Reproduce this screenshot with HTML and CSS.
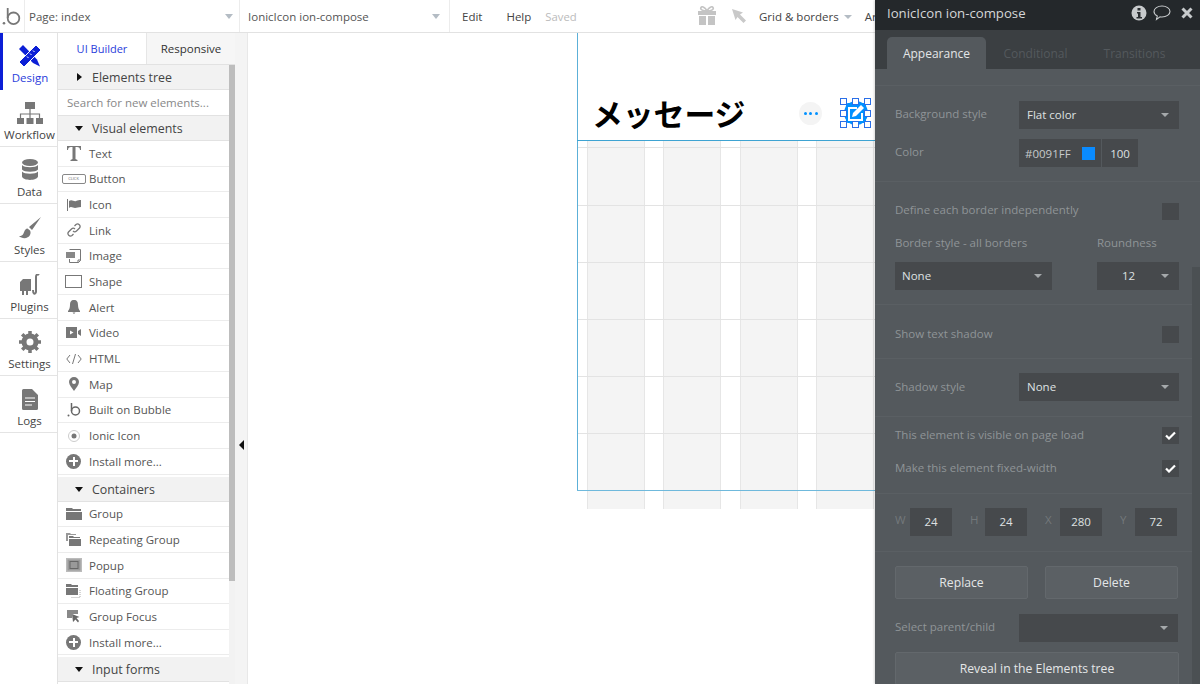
FILE: index.html
```html
<!DOCTYPE html>
<html lang="en">
<head>
  <meta charset="UTF-8" />
  <title>Page: index</title>
  <link rel="stylesheet" href="styles.css">
</head>
<body>

  <div class="topbar">
    <div class="logo">
      <svg width="20" height="20" viewBox="0 0 20 20"><circle cx="11.500" cy="12.300" r="5.800" fill="none" stroke="#777" stroke-width="1.800"/><path d="M5.700 2v10" stroke="#777" stroke-width="1.800"/><circle cx="2" cy="17.300" r="1.300" fill="#777"/></svg>
    </div>
    <div class="top-select page-select">Page: index<span class="caret"></span></div>
    <div class="top-select element-select">IonicIcon ion-compose<span class="caret"></span></div>
    <div class="top-menu">
      <span class="menu-item edit">Edit</span>
      <span class="menu-item help">Help</span>
      <span class="saved">Saved</span>
    </div>
    <div class="top-right">
      <svg width="20" height="20" viewBox="0 0 20 20"><path d="M1 5h18v4H1zM2 10h7v9H2zM11 10h7v9h-7z" fill="#c4c4c4"/><path d="M10 5C8 1 5 0 4 1.500S5 5 10 5c5 0 7-2 6-3.500S12 1 10 5z" fill="none" stroke="#c4c4c4" stroke-width="1.600"/></svg>
      <svg class="cursor-icon" width="16" height="16" viewBox="0 0 16 16"><path d="M1 1l11 3.500-3 2 6 6-2.500 2.500-6-6-2 3z" fill="#c9c9c9"/></svg>
      <span class="menu-item grid-menu">Grid &amp; borders<span class="caret small"></span></span>
      <span class="menu-item">Ar</span>
    </div>
  </div>

  <div class="main">
    <div class="rail">
      <div class="rail-item active">
        <svg width="22" height="22" viewBox="0 0 22 22"><path d="M4 0L0 4l14 14 7 3.500L18 14.500z" fill="#0c1fd6"/><path d="M17 0l5 5L5 22l-5-5z" fill="#0c1fd6" stroke="#fff" stroke-width="1"/><path d="M14 5.500l1.500 1.500M11 8.500l1.500 1.500M8 11.500L9.500 13" stroke="#fff" stroke-width="1"/></svg>
        <span>Design</span>
      </div>
      <div class="rail-item">
        <svg width="26" height="22" viewBox="0 0 26 22"><path d="M8 0h10v7H8zM0 16h7v6H0zM9.500 16h7v6h-7zM19 16h7v6h-7z" fill="#777"/><path d="M13 7v9M3.500 16v-4h19v4" fill="none" stroke="#777" stroke-width="1.200"/></svg>
        <span>Workflow</span>
      </div>
      <div class="rail-item">
        <svg width="18" height="22" viewBox="0 0 18 22"><ellipse cx="9" cy="3.500" rx="8" ry="3.500" fill="#777"/><path d="M1 6c2 3 14 3 16 0v4.500c-2 3-14 3-16 0zM1 12.500c2 3 14 3 16 0v5c-1 4.500-15 4.500-16 0z" fill="#777"/></svg>
        <span>Data</span>
      </div>
      <div class="rail-item">
        <svg width="24" height="22" viewBox="0 0 24 22"><path d="M23 0L11 10l3 3zM9.500 11.500C6 12 6.500 16 4.500 18 3.500 19 2 19 1 19c3 3 9 3 11-1 1-2 .5-3.500 0-4.500z" fill="#777"/></svg>
        <span>Styles</span>
      </div>
      <div class="rail-item">
        <svg width="22" height="22" viewBox="0 0 22 22"><path d="M1 8l3-3h8v12H9v4H7v-4H5v4H3v-4H1z" fill="#777"/><path d="M14 16c0 4 2 5 3 2V3c0-3 2-3 3-2" fill="none" stroke="#777" stroke-width="2"/></svg>
        <span>Plugins</span>
      </div>
      <div class="rail-item">
        <svg width="22" height="22" viewBox="0 0 22 22"><circle cx="11" cy="11" r="6" fill="none" stroke="#777" stroke-width="5"/><path d="M11 0v22M0 11h22M3.200 3.200l15.600 15.600M18.800 3.200L3.200 18.800" stroke="#777" stroke-width="3.500" stroke-dasharray="4 14"/></svg>
        <span>Settings</span>
      </div>
      <div class="rail-item">
        <svg width="16" height="21" viewBox="0 0 16 21"><path d="M0 1.500A1.500 1.500 0 0 1 1.500 0H10l6 6v13.500a1.500 1.500 0 0 1-1.500 1.500h-13A1.500 1.500 0 0 1 0 19.500z" fill="#777"/><path d="M3 9h10M3 12.500h10M3 16h7" stroke="#fff" stroke-width="1.200"/></svg>
        <span>Logs</span>
      </div>
    </div>

    <div class="panel">
      <div class="tabs">
        <div class="tab on">UI Builder</div>
        <div class="tab">Responsive</div>
      </div>
      <div class="list-wrap">
        <div class="list">
          <div class="group-head"><span class="tri right"></span>Elements tree</div>
          <div class="search">Search for new elements...</div>
          <div class="group-head"><span class="tri"></span>Visual elements</div>
          <div class="row"><span class="ico"><svg width="14" height="15" viewBox="0 0 14 15"><path d="M0 0h14v4h-1c0-2-1-3-3-3H8.500v12l2 1v1h-7v-1l2-1V1H4C2 1 1 2 1 4H0z" fill="#777"/></svg></span>Text</div>
          <div class="row"><span class="ico"><span class="click-btn">CLICK</span></span>Button</div>
          <div class="row"><span class="ico"><svg width="14" height="12" viewBox="0 0 14 12"><path d="M0 0h1v12H0zM2 2c3-2 5 1 7 0s3-1 5-1v7c-3 0-4 1-6 1S4 7 2 9z" fill="#777"/></svg></span>Icon</div>
          <div class="row"><span class="ico"><svg width="14" height="14" viewBox="0 0 14 14"><path d="M6 8a2.500 2.500 0 0 0 3.500 0l3-3A2.500 2.500 0 0 0 9 1.500L7.500 3M8 6a2.500 2.500 0 0 0-3.500 0l-3 3A2.500 2.500 0 0 0 5 12.500L6.500 11" fill="none" stroke="#777" stroke-width="1.300"/></svg></span>Link</div>
          <div class="row"><span class="ico"><svg width="15" height="14" viewBox="0 0 15 14"><path d="M3.500.5h11v11l-2 2h-9V10" fill="none" stroke="#777"/><rect x="0" y="3" width="9" height="6" fill="#888"/><path d="M12 14l0-3h3" fill="none" stroke="#777"/></svg></span>Image</div>
          <div class="row"><span class="ico"><span class="shape-box"></span></span>Shape</div>
          <div class="row"><span class="ico"><svg width="12" height="14" viewBox="0 0 12 14"><path d="M6 0c3 0 4 2 4 5 0 3 1 5 2 6v1H0v-1c1-1 2-3 2-6 0-3 1-5 4-5zM4.500 12.500h3L6 14z" fill="#777"/></svg></span>Alert</div>
          <div class="row"><span class="ico"><svg width="15" height="11" viewBox="0 0 15 11"><path d="M0 0h11v11H0zM12 4l3-2v7l-3-2z" fill="#777"/><path d="M4 3.500l3.500 2L4 7.500z" fill="#fff"/></svg></span>Video</div>
          <div class="row"><span class="ico"><svg width="16" height="10" viewBox="0 0 16 10"><path d="M4 1L.8 5 4 9M12 1l3.200 4L12 9M9.500 0L6.500 10" fill="none" stroke="#777"/></svg></span>HTML</div>
          <div class="row"><span class="ico"><svg width="10" height="14" viewBox="0 0 10 14"><path fill-rule="evenodd" d="M5 0a5 5 0 0 1 5 5c0 3-3 6-5 9-2-3-5-6-5-9a5 5 0 0 1 5-5zm0 3a2 2 0 1 0 0 4 2 2 0 0 0 0-4z" fill="#777"/></svg></span>Map</div>
          <div class="row"><span class="ico"><svg width="14" height="15" viewBox="0 0 14 15"><circle cx="8.500" cy="9" r="4" fill="none" stroke="#666" stroke-width="1.500"/><path d="M4.500 1v8" stroke="#666" stroke-width="1.500"/><circle cx="1.500" cy="13.500" r="1" fill="#666"/></svg></span>Built on Bubble</div>
          <div class="row"><span class="ico"><svg width="12" height="12" viewBox="0 0 12 12"><circle cx="6" cy="6" r="5.500" fill="none" stroke="#ccc"/><circle cx="6" cy="6" r="2.500" fill="#777"/></svg></span>Ionic Icon</div>
          <div class="row"><span class="ico"><span class="plus"></span></span>Install more...</div>
          <div class="group-head"><span class="tri"></span>Containers</div>
          <div class="row"><span class="ico"><svg width="16" height="13" viewBox="0 0 16 13"><path d="M0 1h6l1 1h8v2H0zM0 5h16v8H0z" fill="#777"/></svg></span>Group</div>
          <div class="row"><span class="ico"><svg width="15" height="13" viewBox="0 0 15 13"><path d="M0 0h4l1 1h5v1H2v6H0z" fill="#999"/><path d="M3 3h4l1 1h6v1H3zM3 6h12v7H3z" fill="#777"/></svg></span>Repeating Group</div>
          <div class="row"><span class="ico"><svg width="16" height="14" viewBox="0 0 16 14"><rect width="16" height="14" fill="#bbb"/><rect x="1.500" y="1.500" width="13" height="11" fill="#999"/><rect x="4" y="3.500" width="8" height="7" fill="none" stroke="#666"/></svg></span>Popup</div>
          <div class="row"><span class="ico"><svg width="15" height="14" viewBox="0 0 15 14"><path d="M0 0h5l1 1h6v2H0zM0 4h12v7H0z" fill="#777"/><path d="M14 6v7.500H5" fill="none" stroke="#aaa" stroke-dasharray="1 1"/></svg></span>Floating Group</div>
          <div class="row"><span class="ico"><svg width="13" height="13" viewBox="0 0 13 13"><path d="M0 0h11v4H5v4H0z" fill="#888"/><path d="M5 4l7.500 3-3 1 2.500 3-1 1.500-2.500-3L6 12z" fill="#666"/></svg></span>Group Focus</div>
          <div class="row"><span class="ico"><span class="plus"></span></span>Install more...</div>
          <div class="group-head"><span class="tri"></span>Input forms</div>
        </div>
        <div class="scroll"><div class="scroll-thumb"></div></div>
      </div>
    </div>

    <div class="gutter"><span class="collapse"></span></div>

    <div class="canvas">
      <div class="grid-cols">
        <div class="grid-col"></div>
        <div class="grid-col"></div>
        <div class="grid-col"></div>
        <div class="grid-col"></div>
      </div>
      <div class="h-line" style="top:114px"></div>
      <div class="h-line" style="top:172px"></div>
      <div class="h-line" style="top:229px"></div>
      <div class="h-line" style="top:286px"></div>
      <div class="h-line" style="top:343px"></div>
      <div class="h-line" style="top:400px"></div>
      <div class="frame-left"></div>
      <div class="frame-bottom"></div>
      <div class="page-rule"></div>
      <div class="title">メッセージ</div>
      <div class="more"><i></i><i></i><i></i></div>
      <div class="compose">
        <svg width="24" height="24" viewBox="0 0 24 24"><circle cx="12" cy="12" r="12" fill="#0091ff"/><rect x="2" y="2" width="20" height="20" rx="2" fill="#0091ff"/><path d="M18 12v7H5V7h8" fill="none" stroke="#fff" stroke-width="2"/><path d="M8 16l1-4 8-8 3 3-8 8z" fill="#fff"/></svg>
        <b class="h1"></b><b class="h2"></b><b class="h3"></b><b class="h4"></b><b class="h5"></b><b class="h6"></b><b class="h7"></b><b class="h8"></b>
      </div>
    </div>
  </div>

  <div class="editor">
    <div class="editor-head">
      <span class="editor-title">IonicIcon ion-compose</span>
      <svg width="16" height="16" viewBox="0 0 16 16"><circle cx="8" cy="8" r="7.500" fill="#c7cacc"/><path d="M6.500 3h3v2.500h-3zM6 7h3.500v5H11v1.500H5.500V12H7V8.500H6z" fill="#2a2e31"/></svg>
      <svg class="chat" width="18" height="16" viewBox="0 0 18 16"><path d="M9 1c4.400 0 8 2.400 8 5.500S13.400 12 9 12c-.7 0-1.400 0-2-.2L3.500 14.500l.8-3.500C2.300 10 1 8.400 1 6.500 1 3.400 4.600 1 9 1z" fill="none" stroke="#c7cacc" stroke-width="1.100"/></svg>
      <svg class="close" width="12" height="12" viewBox="0 0 12 12"><path d="M1.500 1.500l9 9M10.500 1.500l-9 9" stroke="#c7cacc" stroke-width="3"/></svg>
    </div>
    <div class="editor-tabs">
      <div class="etab on">Appearance</div>
      <div class="etab">Conditional</div>
      <div class="etab">Transitions</div>
    </div>
    <div class="editor-body">
      <div class="sec sec-bg">
        <div class="field">
          <label>Background style</label>
          <div class="sel wide">Flat color<span class="caret"></span></div>
        </div>
        <div class="field">
          <label>Color</label>
          <div class="color-box">
            <span class="hex">#0091FF</span><span class="swatch"></span>
          </div>
          <div class="opacity">100</div>
        </div>
      </div>
      <div class="sec sec-border">
        <div class="field check-row">
          <label>Define each border independently</label>
          <span class="check"></span>
        </div>
        <div class="border-cols">
          <div class="col-left">
            <label>Border style - all borders</label>
            <div class="sel mid">None<span class="caret"></span></div>
          </div>
          <div class="col-right">
            <label>Roundness</label>
            <div class="sel small-sel"><em>12</em><span class="caret"></span></div>
          </div>
        </div>
      </div>
      <div class="sec sec-shadow">
        <div class="field check-row">
          <label>Show text shadow</label>
          <span class="check"></span>
        </div>
      </div>
      <div class="sec sec-style">
        <div class="field">
          <label>Shadow style</label>
          <div class="sel wide">None<span class="caret"></span></div>
        </div>
      </div>
      <div class="sec sec-vis">
        <div class="field check-row">
          <label>This element is visible on page load</label>
          <span class="check on"><svg width="11" height="9" viewBox="0 0 11 9"><path d="M1 4.500l3 3 6-6" fill="none" stroke="#fff" stroke-width="2.200"/></svg></span>
        </div>
        <div class="field check-row">
          <label>Make this element fixed-width</label>
          <span class="check on"><svg width="11" height="9" viewBox="0 0 11 9"><path d="M1 4.500l3 3 6-6" fill="none" stroke="#fff" stroke-width="2.200"/></svg></span>
        </div>
      </div>
      <div class="sec sec-size">
        <span class="dim">W</span><span class="num">24</span>
        <span class="dim">H</span><span class="num">24</span>
        <span class="dim">X</span><span class="num">280</span>
        <span class="dim">Y</span><span class="num">72</span>
      </div>
      <div class="sec-actions">
        <div class="btn-row">
          <div class="btn">Replace</div>
          <div class="btn">Delete</div>
        </div>
        <div class="field">
          <label>Select parent/child</label>
          <div class="sel wide"><span class="caret"></span></div>
        </div>
        <div class="btn reveal">Reveal in the Elements tree</div>
      </div>
      <div class="editor-scroll"></div>
    </div>
  </div>

</body>
</html>
```

FILE: styles.css
```css
* {
  margin: 0;
  padding: 0;
  box-sizing: border-box;
}

body {
  width: 1200px;
  height: 684px;
  overflow: hidden;
  position: relative;
  background: #fff;
  color: #444;
  font-family: "Open Sans", "Noto Sans", sans-serif;
  font-size: 11.500px;
}

.caret {
  display: inline-block;
  width: 0;
  height: 0;
  border-left: 4.500px solid transparent;
  border-right: 4.500px solid transparent;
  border-top: 5px solid #b4bcc4;
}

/* top bar */
.topbar {
  height: 33px;
  display: flex;
  align-items: center;
  border-bottom: 1px solid #e2e2e2;
  background: #fff;
}

.logo {
  width: 25px;
  height: 32px;
  display: flex;
  align-items: center;
  justify-content: center;
  border-right: 1px solid #ececec;
}

.top-select {
  height: 32px;
  display: flex;
  align-items: center;
  justify-content: space-between;
  border-right: 1px solid #ececec;
  color: #555;
}

.page-select {
  width: 215px;
  padding: 0 6px 0 4px;
}

.element-select {
  width: 210px;
  padding: 0 9px 0 8px;
}

.top-menu {
  display: flex;
  align-items: center;
  padding-left: 12px;
}

.menu-item {
  color: #444;
}

.help {
  margin-left: 24px;
}

.saved {
  margin-left: 14px;
  font-size: 11.300px;
  color: #bbb;
}

.top-right {
  position: absolute;
  top: 0;
  left: 697px;
  height: 32px;
  display: flex;
  align-items: center;
  white-space: nowrap;
}

.top-right > * {
  flex: none;
}

.cursor-icon {
  margin-left: 14px;
}

.grid-menu {
  margin-left: 12px;
  margin-right: 13px;
}

.caret.small {
  margin-left: 5px;
  border-left-width: 4px;
  border-right-width: 4px;
  border-top-width: 4px;
  vertical-align: middle;
}

/* main area */
.main {
  display: flex;
  height: 651px;
}

.rail {
  width: 58px;
  flex: none;
  border-right: 1px solid #e2e2e2;
}

.rail-item {
  height: 57.170px;
  display: flex;
  flex-direction: column;
  align-items: center;
  justify-content: flex-end;
  padding: 0 0 4px 2px;
  gap: 2px;
  border-bottom: 1px solid #e4e4e4;
  color: #444;
}

.rail-item svg {
  margin-bottom: 1px;
}

.rail-item.active {
  color: #2a3ddb;
  padding: 0 0 5px;
  border-left: 3px solid #0c1fd6;
  border-bottom: none;
}

.panel {
  width: 177px;
  flex: none;
  display: flex;
  flex-direction: column;
  overflow: hidden;
}

.tabs {
  height: 32px;
  display: flex;
  flex: none;
  border-bottom: 1px solid #e2e2e2;
}

.tab {
  flex: 1;
  display: flex;
  align-items: center;
  justify-content: center;
  background: #f6f6f6;
  color: #333;
  border-left: 1px solid #e6e6e6;
}

.tab.on {
  background: #fff;
  color: #2a3ddb;
  font-size: 11px;
  border-left: none;
  flex: 0 0 88px;
}

.list-wrap {
  display: flex;
  flex: 1;
  overflow: hidden;
}

.list {
  width: 171px;
  flex: none;
}

.group-head {
  height: 25px;
  display: flex;
  align-items: center;
  padding-left: 17px;
  background: #f2f2f2;
  font-size: 12.400px;
  color: #444;
  border-bottom: 1px solid #e2e2e2;
}

.row + .group-head {
  margin-top: 2px;
  padding-top: 1px;
}

.tri {
  width: 0;
  height: 0;
  margin-right: 9px;
  border-left: 4px solid transparent;
  border-right: 4px solid transparent;
  border-top: 5px solid #111;
}

.tri.right {
  margin-left: 2px;
  margin-right: 10px;
  border-top: 4.500px solid transparent;
  border-bottom: 4.500px solid transparent;
  border-left: 5px solid #111;
  border-right: none;
}

.search {
  height: 26px;
  display: flex;
  align-items: center;
  padding: 0 0 0 9px;
  color: #888;
  border-bottom: 1px solid #e2e2e2;
}

.row {
  height: 25.670px;
  display: flex;
  align-items: center;
  color: #555;
  border-bottom: 1px solid #ececec;
}

.ico {
  width: 31px;
  flex: none;
  display: flex;
  justify-content: center;
}

.click-btn {
  width: 24px;
  height: 10px;
  border: 1px solid #888;
  border-radius: 2px;
  font-size: 4px;
  line-height: 8px;
  text-align: center;
  color: #666;
}

.shape-box {
  width: 17px;
  height: 13px;
  border: 1px solid #777;
}

.plus {
  position: relative;
  width: 15px;
  height: 15px;
  border-radius: 50%;
  background: #777;
}

.plus::before,
.plus::after {
  content: "";
  position: absolute;
  background: #fff;
}

.plus::before {
  left: 3px;
  top: 6.500px;
  width: 9px;
  height: 2px;
}

.plus::after {
  left: 6.500px;
  top: 3px;
  width: 2px;
  height: 9px;
}

.scroll {
  width: 6px;
  flex: none;
  background: #f2f2f2;
}

.scroll-thumb {
  height: 516px;
  background: #bdbdbd;
}

.gutter {
  width: 13px;
  flex: none;
  display: flex;
  align-items: center;
  justify-content: center;
  padding-top: 172px;
  background: #f4f4f4;
  border-right: 1px solid #e8e8e8;
}

.collapse {
  width: 0;
  height: 0;
  border-top: 5px solid transparent;
  border-bottom: 5px solid transparent;
  border-right: 5px solid #111;
}

/* free canvas */
.canvas {
  position: relative;
  flex: 1;
  overflow: hidden;
  background: #fff;
}

.grid-cols {
  position: absolute;
  left: 339px;
  top: 108px;
  height: 368px;
  display: flex;
  gap: 18.300px;
}

.grid-col {
  width: 58px;
  background: #f4f4f4;
  border-left: 1px solid #e6e6e6;
  border-right: 1px solid #e6e6e6;
}

.h-line {
  position: absolute;
  left: 329px;
  right: 0;
  height: 1px;
  background: #e3e3e3;
}

.frame-left {
  position: absolute;
  left: 329px;
  top: 0;
  width: 1px;
  height: 457px;
  background: #5cb0d8;
}

.frame-bottom {
  position: absolute;
  left: 329px;
  right: 0;
  top: 457px;
  height: 1px;
  background: #6fb9dc;
}

.page-rule {
  position: absolute;
  left: 329px;
  right: 0;
  top: 107px;
  height: 1px;
  background: #3ea3d2;
}

.title {
  position: absolute;
  left: 344px;
  top: 58px;
  font-family: "Noto Sans CJK JP", sans-serif;
  font-size: 30.800px;
  font-weight: 700;
  line-height: 44px;
  color: #000;
}

.more {
  position: absolute;
  left: 551px;
  top: 69px;
  width: 23px;
  height: 23px;
  display: flex;
  align-items: center;
  justify-content: center;
  gap: 2.500px;
  border-radius: 50%;
  background: #f4f4f4;
}

.more i {
  width: 3px;
  height: 3px;
  border-radius: 50%;
  background: #0091ff;
}

.compose {
  position: absolute;
  left: 596px;
  top: 68px;
  width: 24px;
  height: 24px;
}

.compose b {
  position: absolute;
  width: 7px;
  height: 7px;
  background: #fff;
  border: 1px solid #2a6fe8;
}

.compose .h1 { left: -4px; top: -3px; }
.compose .h2 { left: 8px; top: -3px; }
.compose .h3 { left: 20px; top: -3px; }
.compose .h4 { left: -4px; top: 9px; }
.compose .h5 { left: 20px; top: 9px; }
.compose .h6 { left: -4px; top: 20px; }
.compose .h7 { left: 8px; top: 20px; }
.compose .h8 { left: 20px; top: 20px; }

/* property editor */
.editor {
  position: absolute;
  left: 875px;
  top: 0;
  width: 325px;
  height: 684px;
  display: flex;
  flex-direction: column;
  overflow: hidden;
  background: #54595d;
  color: #8f9497;
  box-shadow: -1px 0 2px rgba(0, 0, 0, 0.15);
}

.editor-head {
  height: 30px;
  flex: none;
  display: flex;
  align-items: center;
  padding: 0 7px 5px 12px;
  background: #24282b;
}

.editor-title {
  flex: 1;
  font-size: 13.200px;
  color: #d4d6d8;
}

.chat {
  margin-left: 6px;
}

.close {
  margin-left: 10px;
}

.editor-tabs {
  height: 39px;
  flex: none;
  display: flex;
  align-items: flex-end;
  padding-left: 12px;
  background: #3b3f42;
  font-size: 12px;
}

.etab {
  height: 32px;
  width: 99px;
  display: flex;
  align-items: center;
  justify-content: center;
  color: #54595d;
}

.etab.on {
  background: #54595d;
  color: #e4e6e7;
  border-radius: 5px 5px 0 0;
}

.editor-body {
  position: relative;
  flex: 1;
  padding-top: 16px;
}

.editor-scroll {
  position: absolute;
  right: 0;
  top: 198px;
  bottom: 0;
  width: 8px;
  background: #4b5053;
}

.sec {
  padding: 0 21px 0 20px;
  border-top: 1px solid #5a5f63;
}

.sec-bg {
  height: 96px;
  padding-top: 15px;
}

.sec-border {
  height: 123px;
  padding-top: 21px;
}

.sec-shadow {
  height: 54px;
  padding-top: 21px;
}

.sec-shadow .check-row label {
  margin-top: -3px;
}

.sec-style {
  height: 58px;
  padding-top: 14px;
}

.sec-vis {
  height: 77px;
  padding-top: 10px;
}

.sec-size {
  height: 58px;
  display: flex;
  align-items: flex-start;
  padding-top: 14px;
  padding-right: 0;
}

.field {
  display: flex;
  align-items: center;
  margin-bottom: 10px;
}

.field label {
  width: 124px;
  flex: none;
  margin-top: -3px;
}

.sec-style .field label {
  margin-top: -1px;
}

.check-row {
  justify-content: space-between;
  height: 17px;
  margin-bottom: 16px;
}

.check-row label {
  width: auto;
  margin-top: -2px;
}

.sec-border .check-row label {
  margin-top: -4px;
}

.check {
  width: 17px;
  height: 17px;
  display: flex;
  align-items: center;
  justify-content: center;
  background: #46494c;
}

.sel {
  height: 28px;
  display: flex;
  align-items: center;
  justify-content: space-between;
  padding: 0 10px 2px 8px;
  background: #46494c;
  color: #dfe1e2;
}

.sel .caret {
  margin-left: auto;
  margin-top: 2px;
  border-left-width: 4px;
  border-right-width: 4px;
  border-top-width: 4.500px;
  border-top-color: #a5a9ab;
}

.sel.wide {
  width: 160px;
}

.sel.mid {
  width: 157px;
  margin-top: 11px;
  padding-left: 7px;
}

.sel.small-sel {
  width: 82px;
  margin-top: 11px;
}

.sel em {
  font-style: normal;
  margin-left: 17px;
}

.border-cols {
  display: flex;
  justify-content: space-between;
  margin-top: -2px;
}

.col-left label,
.col-right label {
  display: block;
  line-height: 17px;
}

.color-box {
  width: 82px;
  height: 28px;
  display: flex;
  align-items: center;
  justify-content: space-between;
  padding: 0 6px;
  background: #46494c;
  color: #c6c9cb;
}

.swatch {
  width: 13px;
  height: 13px;
  background: #0a8bff;
}

.opacity {
  width: 36px;
  height: 28px;
  margin-left: 1px;
  display: flex;
  align-items: center;
  justify-content: center;
  background: #46494c;
  color: #dfe1e2;
}

.dim {
  width: 15px;
  line-height: 24px;
  color: #73787b;
}

.num {
  width: 42px;
  height: 28px;
  margin-right: 18px;
  padding-bottom: 1px;
  display: flex;
  align-items: center;
  justify-content: center;
  background: #46494c;
  color: #dfe1e2;
}

.sec-actions {
  padding: 14px 22px 0 20px;
  border-top: 1px solid #5a5f63;
}

.btn-row {
  display: flex;
  justify-content: space-between;
  margin-bottom: 15px;
}

.btn {
  width: 133px;
  height: 33px;
  padding-bottom: 1px;
  display: flex;
  align-items: center;
  justify-content: center;
  background: #5b6064;
  border: 1px solid #63686c;
  border-radius: 2px;
  font-size: 12.200px;
  color: #e4e6e7;
}

.btn.reveal {
  width: 284px;
}
```
